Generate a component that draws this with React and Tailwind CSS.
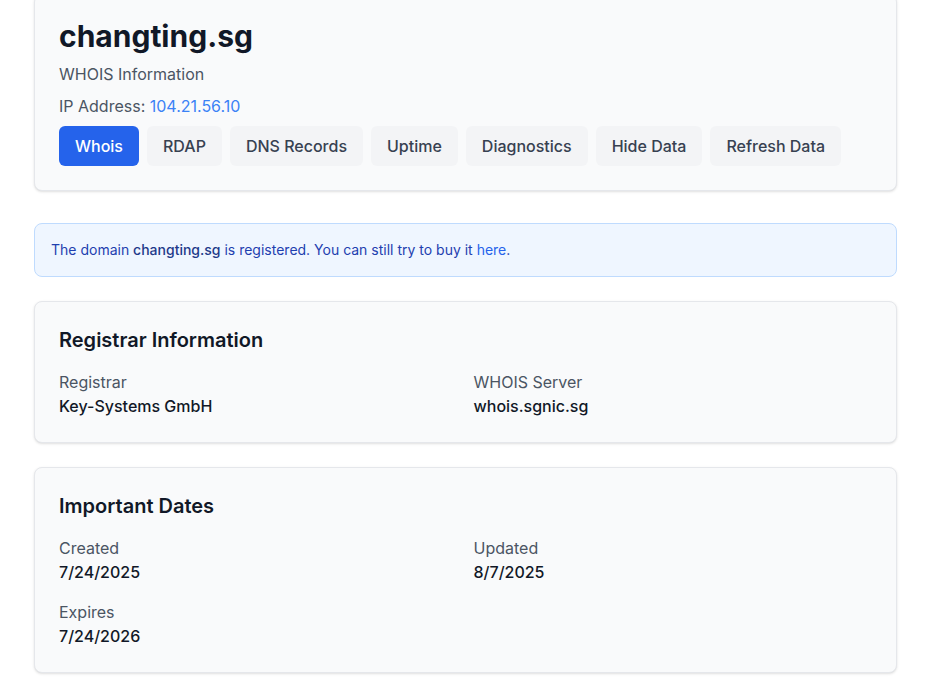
import React, { useState } from "react";

const tabs = ["Whois", "RDAP", "DNS Records", "Uptime", "Diagnostics", "Hide Data", "Refresh Data"];

const Field = ({ label, value }) => (
  <div>
    <p className="text-base text-[#4b5563]">{label}</p>
    <p className="text-base font-medium text-[#111827]">{value}</p>
  </div>
);

const Section = ({ title, children }) => (
  <div className="bg-[#f9fafb] border border-[#e5e7eb] rounded-lg shadow-sm p-6 mb-6">
    <h2 className="text-xl font-semibold text-[#111827] mb-4">{title}</h2>
    <div className="grid grid-cols-2 gap-4">{children}</div>
  </div>
);

const App = () => {
  const [active, setActive] = useState("Whois");

  return (
    <div className="min-h-screen bg-white pl-[34px] pr-[40px] font-['Inter',sans-serif] -mt-[6px] overflow-hidden">
      {/* Header card */}
      <div className="bg-[#f9fafb] border border-[#e5e7eb] rounded-lg shadow-sm px-6 pt-[23px] pb-6 mb-8">
        <h1 className="text-3xl font-bold text-[#111827]">changting.sg</h1>
        <p className="mt-2 text-base text-[#4b5563]">WHOIS Information</p>
        <p className="mt-2 text-base text-[#4b5563]">
          IP Address: <span className="text-[#3b82f6]">104.21.56.10</span>
        </p>
        <div className="mt-2 flex flex-wrap gap-2">
          {tabs.map((t) => (
            <button
              key={t}
              onClick={() => setActive(t)}
              className={
                active === t
                  ? "px-4 py-2 rounded-md text-base font-medium bg-[#2563eb] text-white"
                  : "px-4 py-2 rounded-md text-base font-medium bg-[#f3f4f6] text-[#374151]"
              }
            >
              {t}
            </button>
          ))}
        </div>
      </div>

      {/* Notice */}
      <div className="bg-[#eff6ff] border border-[#bfdbfe] rounded-lg p-4 mb-6">
        <p className="text-sm text-[#1e40af]">
          The domain <span className="font-medium text-[#1e3a8a]">changting.sg</span> is registered. You can still try to buy it{" "}
          <a href="#" className="text-[#2563eb]">here</a>.
        </p>
      </div>

      <Section title="Registrar Information">
        <Field label="Registrar" value="Key-Systems GmbH" />
        <Field label="WHOIS Server" value="whois.sgnic.sg" />
      </Section>

      <Section title="Important Dates">
        <Field label="Created" value="7/24/2025" />
        <Field label="Updated" value="8/7/2025" />
        <Field label="Expires" value="7/24/2026" />
      </Section>
    </div>
  );
};

export default App;
